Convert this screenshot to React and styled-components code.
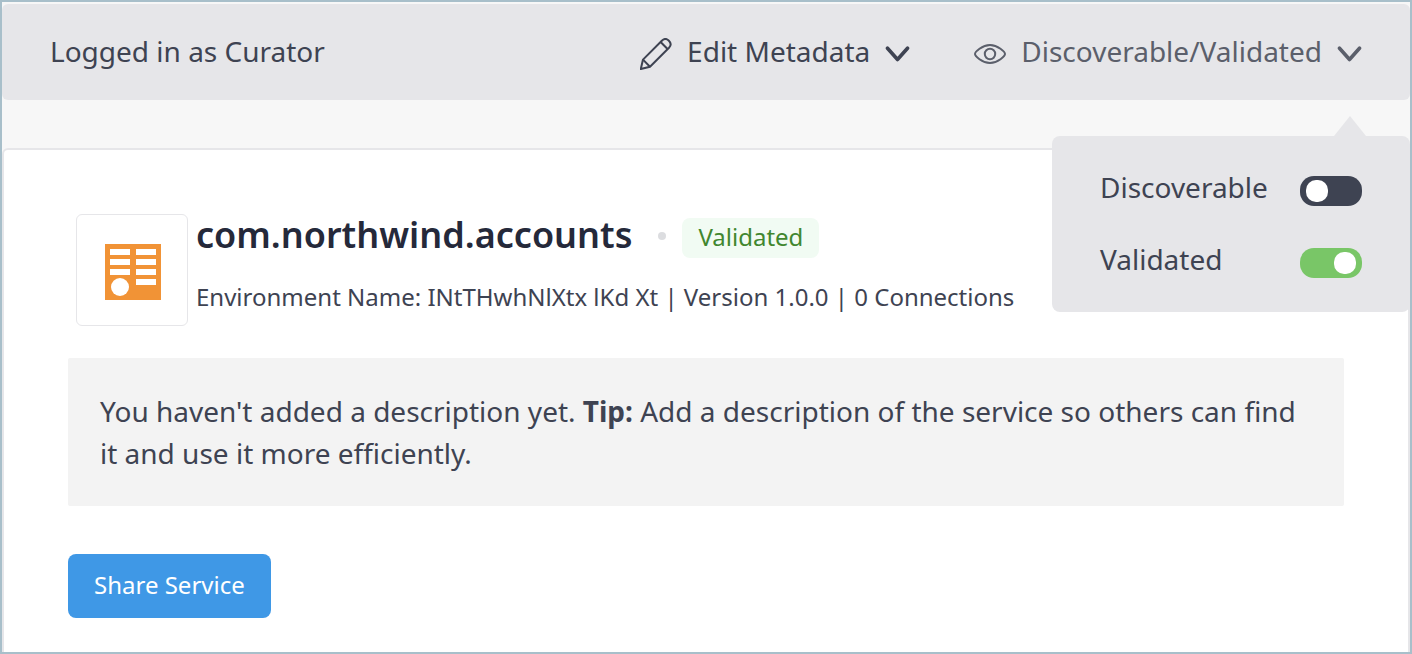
import React, { useState } from "react";
import styled, { createGlobalStyle } from "styled-components";

const GlobalStyle = createGlobalStyle`
  *, *::before, *::after { box-sizing: border-box; }
  body {
    margin: 0;
    color: #3e4352;
    font-family: "Noto Sans", "Open Sans", sans-serif;
    font-size: 28px;
    line-height: 42px;
  }
  button, input { font: inherit; margin: 0; }
`;

const Frame = styled.div`
  display: flex;
  flex-direction: column;
  min-height: 100vh;
  padding-top: 2px;
  border: 2px solid #a8bfca;
  background: #f7f7f7;
`;

const Toolbar = styled.header`
  display: flex;
  justify-content: space-between;
  height: 96px;
  padding: 0 48px;
  border-radius: 6px;
  background: #e6e6e9;
`;

const Status = styled.p`
  align-self: center;
  margin: 0;
  padding-bottom: 2px;
`;

const Menus = styled.nav`
  display: flex;
  gap: 64px;
`;

const Menu = styled.div`
  position: relative;
  display: flex;
`;

const MenuButton = styled.button`
  display: flex;
  align-items: center;
  gap: 15px;
  padding: 0 0 2px;
  border: 0;
  background: none;
  color: ${(p) => (p.$muted ? "#5b5f6b" : "#3e4352")};
  cursor: pointer;

  svg {
    margin-top: 5px;
  }
`;

const Popover = styled.div`
  position: absolute;
  z-index: 1;
  top: calc(100% + 36px);
  right: -48px;
  display: flex;
  flex-direction: column;
  gap: 32px;
  width: 358px;
  padding: 32px 48px;
  border-radius: 8px;
  background: #e6e6e9;

  &::before {
    content: "";
    position: absolute;
    right: 44px;
    bottom: 100%;
    border: 16px solid transparent;
    border-top: 0;
    border-bottom: 20px solid #e6e6e9;
  }
`;

const Option = styled.label`
  display: flex;
  justify-content: space-between;
  align-items: flex-end;
  line-height: 38px;
  cursor: pointer;

  span {
    padding-bottom: 2px;
  }
`;

const Switch = styled.input`
  appearance: none;
  display: flex;
  align-items: center;
  width: 62px;
  height: 30px;
  margin-bottom: 2px;
  padding: 0 6px;
  border-radius: 14px;
  background: #3e4352;
  cursor: pointer;

  &::before {
    content: "";
    width: 22px;
    height: 22px;
    border-radius: 10px;
    background: #fff;
  }

  &:checked {
    justify-content: flex-end;
    background: #79c667;
  }
`;

const Card = styled.main`
  flex: 1;
  margin-top: 48px;
  padding: 64px 64px 34px;
  border: 2px solid #e6e6e9;
  border-bottom: 0;
  border-radius: 6px 6px 0 0;
  background: #fff;
`;

const ServiceHeader = styled.div`
  display: flex;
  gap: 8px;
  padding-left: 8px;
`;

const Logo = styled.div`
  display: flex;
  flex: none;
  align-items: center;
  justify-content: center;
  width: 112px;
  height: 112px;
  padding: 4px 0 0 2px;
  border: 1px solid #e6e6e9;
  border-radius: 6px;
`;

const ServiceInfo = styled.div`
  display: flex;
  flex-direction: column;
  gap: 16px;
`;

const TitleRow = styled.div`
  display: flex;
  align-items: center;
`;

const Title = styled.h1`
  margin: 0;
  padding-bottom: 2px;
  color: #25293a;
  font-size: 36px;
  font-weight: 600;
  line-height: 42px;
`;

const Dot = styled.span`
  width: 8px;
  height: 8px;
  margin: 0 16px 0 26px;
  border-radius: 50%;
  background: #dcdde0;
`;

const Badge = styled.span`
  margin-top: 4px;
  padding: 0 16px 2px;
  border-radius: 8px;
  background: #f1fbf3;
  color: #41872f;
  font-size: 24px;
  line-height: 38px;
`;

const Meta = styled.p`
  margin: 0;
  font-size: 24px;
  line-height: 46px;
`;

const Notice = styled.p`
  margin: 32px 0 48px;
  padding: 32px;
  border-radius: 2px;
  background: #f3f3f3;
`;

const PrimaryButton = styled.button`
  height: 64px;
  padding: 0 26px 2px;
  border: 0;
  border-radius: 8px;
  background: #3f98e6;
  color: #fff;
  font-size: 24px;
  cursor: pointer;
`;

const PencilIcon = () => (
  <svg width="32" height="32" viewBox="0 0 32 32" fill="none" stroke="currentColor" strokeWidth="2" strokeLinejoin="round" aria-hidden="true">
    <path d="M.8 31 3 21.600 21.800 2.800C24 .6 26.800.6 28.900 2.700S31.100 7.500 29 9.700L10 28.700Z" />
    <path d="M20.600 4 27.800 11.200M3 21.600l7 7.100" />
  </svg>
);

const EyeIcon = () => (
  <svg width="32" height="32" viewBox="0 0 32 32" fill="none" stroke="currentColor" strokeWidth="2" aria-hidden="true">
    <path d="M1 16C1 14 8 7 16 7S31 14 31 16 24 25 16 25 1 18 1 16Z" strokeLinejoin="round" />
    <circle cx="16" cy="16" r="5.200" />
  </svg>
);

const ChevronIcon = () => (
  <svg width="25" height="16" viewBox="0 0 25 16" fill="none" stroke="currentColor" strokeWidth="3.600" strokeLinecap="round" strokeLinejoin="round" aria-hidden="true">
    <path d="M2.500 2.200 12.500 13.500 22.500 2.200" />
  </svg>
);

const ServiceIcon = () => (
  <svg width="56" height="56" viewBox="0 0 56 56" aria-hidden="true">
    <rect width="56" height="56" fill="#f19336" />
    <g fill="#fff">
      <rect x="5" y="5" width="20" height="6" />
      <rect x="31" y="5" width="20" height="6" />
      <rect x="5" y="15" width="20" height="6" />
      <rect x="31" y="15" width="20" height="6" />
      <rect x="5" y="25" width="20" height="6" />
      <rect x="31" y="25" width="20" height="6" />
      <rect x="31" y="35" width="20" height="6" />
      <circle cx="15" cy="43" r="9" />
    </g>
  </svg>
);

export default function App() {
  const [discoverable, setDiscoverable] = useState(false);
  const [validated, setValidated] = useState(true);

  return (
    <>
      <GlobalStyle />
      <Frame>
        <Toolbar>
          <Status>Logged in as Curator</Status>
          <Menus>
            <Menu>
              <MenuButton type="button">
                <PencilIcon />
                <span>Edit Metadata</span>
                <ChevronIcon />
              </MenuButton>
            </Menu>
            <Menu>
              <MenuButton type="button" $muted aria-expanded="true">
                <EyeIcon />
                <span>Discoverable/Validated</span>
                <ChevronIcon />
              </MenuButton>
              <Popover>
                <Option>
                  <span>Discoverable</span>
                  <Switch type="checkbox" checked={discoverable} onChange={(e) => setDiscoverable(e.target.checked)} />
                </Option>
                <Option>
                  <span>Validated</span>
                  <Switch type="checkbox" checked={validated} onChange={(e) => setValidated(e.target.checked)} />
                </Option>
              </Popover>
            </Menu>
          </Menus>
        </Toolbar>
        <Card>
          <ServiceHeader>
            <Logo>
              <ServiceIcon />
            </Logo>
            <ServiceInfo>
              <TitleRow>
                <Title>com.northwind.accounts</Title>
                <Dot />
                <Badge>Validated</Badge>
              </TitleRow>
              <Meta>Environment Name: INtTHwhNlXtx lKd Xt | Version 1.0.0 | 0 Connections</Meta>
            </ServiceInfo>
          </ServiceHeader>
          <Notice>
            You haven't added a description yet. <strong>Tip:</strong> Add a description of the service so others can
            find it and use it more efficiently.
          </Notice>
          <PrimaryButton type="button">Share Service</PrimaryButton>
        </Card>
      </Frame>
    </>
  );
}
